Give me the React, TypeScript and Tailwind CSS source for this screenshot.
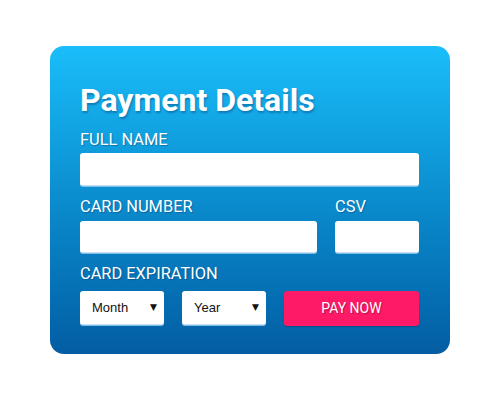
import React from "react";

const LABEL =
  "block text-[16.4px] leading-[20px] text-white [text-shadow:1px_1px_1px_rgba(0,40,90,0.35)]";
const INPUT =
  "block w-full bg-white rounded-[3px] outline-none shadow-[0_1px_0_#7cc0ea] border-b border-[#c9def0] px-2 text-[14px] text-gray-800";

function Select({ label }: { label: string }) {
  return (
    <div className="relative w-[84px] h-[34px]">
      <select
        defaultValue=""
        className="appearance-none w-full h-full bg-white rounded-[3px] shadow-[0_1px_0_#7cc0ea] border-b border-[#c9def0] pl-[12px] text-[13px] text-[#111] outline-none"
        style={{ fontFamily: '"Liberation Sans", Arial, sans-serif' }}
      >
        <option value="">{label}</option>
      </select>
      {/* arrow sits over the native control */}
      <span
        className="pointer-events-none absolute right-[7px] top-[10px] text-[9px] text-[#111]"
        style={{ fontFamily: '"DejaVu Sans", sans-serif' }}
      >
        ▼
      </span>
    </div>
  );
}

export default function App() {
  return (
    <div
      className="w-[500px] h-[400px] bg-white pt-[46px]"
      style={{ fontFamily: "Roboto, 'Liberation Sans', sans-serif" }}
    >
      <div className="mx-auto w-[400px] rounded-[14px] bg-gradient-to-b from-[#1abefa] to-[#045da3] pl-[30px] pr-[31px] pt-[38px] pb-[28px]">
        <h1 className="text-[32px] leading-[32px] font-bold text-white [text-shadow:1px_2px_2px_rgba(0,40,90,0.35)]">
          Payment Details
        </h1>

        <label className={`${LABEL} mt-[14px]`}>FULL NAME</label>
        <input className={`${INPUT} h-[33px] mt-[3px]`} />

        <div className="flex gap-[18px] mt-[11px]">
          <div className="w-[237px]">
            <label className={LABEL}>CARD NUMBER</label>
            <input className={`${INPUT} h-[32px] mt-[4px]`} />
          </div>
          <div className="w-[84px]">
            <label className={LABEL}>CSV</label>
            <input className={`${INPUT} h-[32px] mt-[4px]`} />
          </div>
        </div>

        <label className={`${LABEL} mt-[11px]`}>CARD EXPIRATION</label>
        <div className="flex items-start gap-[18px] mt-[7px]">
          <Select label="Month" />
          <Select label="Year" />
          <button className="w-[135px] h-[35px] rounded-[3px] bg-[#fe1a66] shadow-[0_1px_1px_rgba(0,0,0,0.2)] text-white text-[14px] [text-shadow:1px_1px_1px_rgba(80,0,30,0.4)]">
            PAY NOW
          </button>
        </div>
      </div>
    </div>
  );
}
